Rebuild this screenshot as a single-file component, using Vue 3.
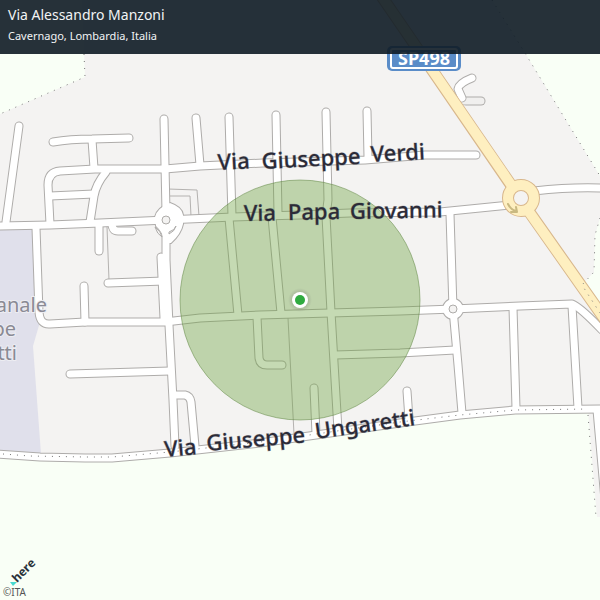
<script setup>
const land =
  'M82 0 L85 77 L0 114 L0 455 L60 458 L112 458 L190 450 L270 441 L400 423 L505 411 L588 411 L597 517 L600 517 L600 312 L582 285 L594 272 L595 235 L600 218 L600 176 L525 53 L492 0 Z'

const boundaries = [
  'M84 54 L85 77 L0 114',
  'M492 0 L525 53 L600 176',
  'M600 218 L595 235 L594 272 L582 285 L600 313',
  'M588 415 L596 517',
  'M3 454 L30 456 L85 457 L112 457 L170 452 L260 442 L400 422 L460 415 L515 410 L588 409'
]

const paths = [
  'M168 189 L197 190 L199 216',
  'M168 196 L190 196 L191 216',
  'M107 227 L109 280',
  'M288 318 L294 434'
]

const roads = [
  'M19 126 L6 222',
  'M53 142 Q70 139 92 139 L129 138',
  'M92 140 L94 168',
  'M50 224 L48 185 Q48 172 60 171 L95 169 L165 169 L200 166 L263 163 L365 160 L425 155 L476 155',
  'M50 196 L94 194',
  'M106 172 Q96 184 94 196 L90 222',
  'M164 119 L166 212',
  'M196 118 L200 165',
  'M229 117 L232 216',
  'M229 218 L238 315',
  'M276 115 L278 213',
  'M272 217 L281 313',
  'M326 112 L328 200 L326 216 L331 312 L338 430',
  'M367 111 L368 157',
  'M0 226 L50 225 L100 223 L166 220 L233 217 L300 215 L350 213 L440 212 L510 205',
  'M534 191 Q570 187 600 188',
  'M99 224 L99 251',
  'M112 223 Q112 231 118 231 L132 231',
  'M108 283 L164 281',
  'M84 286 L85 322',
  'M36 228 L39 312 Q40 325 50 324 L85 322 L165 322 L200 318 L260 315 L330 313 L400 311 L453 309 L520 306 L572 304 Q580 307 602 330',
  'M166 230 L166 260 L169 325 L173 400 L175 446',
  'M161 257 L164 318',
  'M70 374 L170 371',
  'M174 395 L185 395 Q190 396 191 402 L195 446',
  'M257 317 L259 358 Q260 365 267 365 L282 365',
  'M314 388 L316 434',
  'M335 355 L400 353 L455 350',
  'M450 214 L453 309 L458 365 L462 413',
  'M513 308 L516 408',
  'M572 306 L578 408',
  'M407 391 L409 419',
  'M-4 454 L40 457 L85 458 L112 458 L170 453 L260 443 L330 433 L400 423 L460 415 L515 410 L604 409',
  'M597 410 L605 500',
  'M472 78 Q459 83 458 89 L462 98'
]

const junction =
  'M155 217 Q157 208 170 203 Q182 207 183 215 L183 224 Q181 234 171 243 L165 243 Q163 232 156 226 Z'

const streetLabels = [
  { text: 'Via', x: 218, y: 170, turn: -3 },
  { text: 'Giuseppe', x: 262, y: 169, turn: -3 },
  { text: 'Verdi', x: 371, y: 162, turn: -3 },
  { text: 'Via', x: 244, y: 221, turn: -1 },
  { text: 'Papa', x: 288, y: 220, turn: -1 },
  { text: 'Giovanni', x: 350, y: 219, turn: -1 },
  { text: 'Via', x: 165, y: 457, turn: -5 },
  { text: 'Giuseppe', x: 207, y: 451, turn: -5 },
  { text: 'Ungaretti', x: 316, y: 439, turn: -8 }
]

const areaLabels = [
  { text: 'anale', x: 47, y: 312 },
  { text: 'pe', x: 16, y: 336 },
  { text: 'tti', x: 17, y: 360 }
]
</script>

<template>
  <main class="map-card">
    <header class="place">
      <h1 class="place-title">Via Alessandro Manzoni</h1>
      <p class="place-region">Cavernago, Lombardia, Italia</p>
    </header>

    <svg class="map" viewBox="0 0 600 600">
      <defs>
        <radialGradient id="pin-shade">
          <stop offset="60%" stop-color="#666" stop-opacity="0.25" />
          <stop offset="100%" stop-color="#666" stop-opacity="0" />
        </radialGradient>
      </defs>
      <rect class="field" width="600" height="600" />
      <path class="land" :d="land" />
      <path class="school" d="M0 229 L37 229 L40 322 L33 346 L41 454 L0 454 Z" />

      <path v-for="d in paths" :key="d" class="footpath" :d="d" />
      <path class="casing" d="M466 101 L481 101" />
      <path class="service" d="M464 101 L481 101" />

      <path v-for="d in roads" :key="'c' + d" class="casing" :d="d" />
      <path class="junction-casing" :d="junction" />
      <circle class="junction-casing" cx="453" cy="309" r="10" />
      <path v-for="d in roads" :key="'r' + d" class="road" :d="d" />
      <path class="junction" :d="junction" />
      <circle class="junction" cx="453" cy="309" r="10" />
      <circle class="island" cx="166" cy="220" r="4" />
      <circle class="island" cx="453" cy="309" r="4" />
      <path class="island" d="M155 227 Q157 234 162 237 Q161 231 155 227 Z" />
      <path class="island" d="M169 234 Q175 231 176 226 Q175 230 169 232 Z" />

      <path class="main-casing" d="M380 -6 L511 185 M530 213 L606 321" />
      <circle class="ring-casing" cx="521" cy="198" r="13" />
      <path class="main-road" d="M380 -6 L514 189 M527 209 L606 321" />
      <circle class="ring" cx="521" cy="198" r="13" />
      <path class="ring-arrow" d="M508 204 Q511 210 516 211 M511 212 L517 212 L516 207" />

      <path v-for="d in boundaries" :key="'b' + d" class="boundary" :d="d" />

      <g>
        <rect class="shield" x="387" y="46" width="74" height="25" rx="5" />
        <rect class="shield-line" x="391" y="49" width="66" height="19" rx="2" />
        <text class="shield-text" x="424" y="65">SP498</text>
      </g>

      <text v-for="l in areaLabels" :key="l.text" class="area-label" :x="l.x" :y="l.y">{{ l.text }}</text>

      <circle class="radius" cx="300" cy="300" r="120" />

      <text
        v-for="l in streetLabels"
        :key="l.text + l.y"
        class="street-label"
        :transform="`translate(${l.x} ${l.y}) rotate(${l.turn})`"
      >{{ l.text }}</text>

      <circle cx="300" cy="300" r="12" fill="url(#pin-shade)" />
      <circle class="pin-rim" cx="300" cy="300" r="8" />
      <circle class="pin" cx="300" cy="300" r="5" />

      <path class="brand-mark" d="M10 582 L17 582 L13 586 Z" />
      <text class="brand" transform="translate(17 583) rotate(-45)">here</text>
      <text class="credit" x="3" y="596">©ITA</text>
    </svg>
  </main>
</template>

<style>
body {
  margin: 0;
}
</style>

<style scoped>
.map-card {
  position: relative;
  font-family: "Noto Sans", "Open Sans", sans-serif;
}
.map {
  display: block;
  width: 100%;
  height: auto;
}
.place {
  position: absolute;
  top: 0;
  left: 0;
  right: 0;
  padding: 5px 8px 9px;
  background: rgba(14, 27, 37, 0.9);
  color: #f2f4f5;
}
.place-title {
  margin: 0;
  font-size: 14px;
  font-weight: 400;
  line-height: 20px;
}
.place-region {
  margin: 0;
  padding-top: 2px;
  font-size: 11px;
  line-height: 18px;
}
.field { fill: #f9fff6; }
.land { fill: #f4f3f2; }
.school { fill: #e0e0eb; }
.footpath, .casing, .service, .road, .boundary, .main-casing, .main-road, .ring-arrow {
  fill: none;
  stroke-linecap: round;
  stroke-linejoin: round;
}
.footpath { stroke: #b4b2b0; stroke-width: 1; }
.casing { stroke: #aeacaa; stroke-width: 9; }
.service { stroke: #f0efee; stroke-width: 7; }
.road { stroke: #fff; stroke-width: 7; }
.junction-casing { fill: #fff; stroke: #aeacaa; stroke-width: 2; }
.junction { fill: #fff; }
.island { fill: #f4f3f2; stroke: #aeacaa; stroke-width: 1; }
.main-casing { stroke: #d8b78c; stroke-width: 12; }
.main-road { stroke: #feefc0; stroke-width: 10; stroke-linecap: butt; }
.ring-casing { fill: #f4f3f2; stroke: #d8b78c; stroke-width: 12; }
.ring { fill: none; stroke: #feefc0; stroke-width: 10; }
.ring-arrow { stroke: #c9b981; stroke-width: 2; }
.boundary {
  stroke: #777;
  stroke-width: 1;
  stroke-linecap: butt;
  stroke-dasharray: 1 6;
}
.shield { fill: #5a8cc8; }
.shield-line { fill: none; stroke: #fff; stroke-width: 2; }
.shield-text {
  fill: #fff;
  font-size: 18px;
  font-weight: 700;
  text-anchor: middle;
}
.area-label {
  fill: #8a8a94;
  stroke: #ededf2;
  stroke-width: 2;
  paint-order: stroke;
  font-size: 20px;
  text-anchor: end;
}
.street-label {
  fill: #2b2b38;
  stroke: rgba(43, 43, 56, 0.3);
  stroke-width: 1;
  paint-order: stroke;
  font-size: 22px;
  font-weight: 500;
}
.radius {
  fill: rgba(111, 163, 65, 0.4);
  stroke: rgba(90, 130, 60, 0.5);
  stroke-width: 1;
}
.pin-rim { fill: #fff; }
.pin { fill: #30ab40; }
.brand-mark { fill: #48dad0; }
.brand {
  fill: #2b323a;
  font-size: 12px;
  font-weight: 700;
}
.credit {
  fill: #555;
  font-size: 10px;
}
</style>
